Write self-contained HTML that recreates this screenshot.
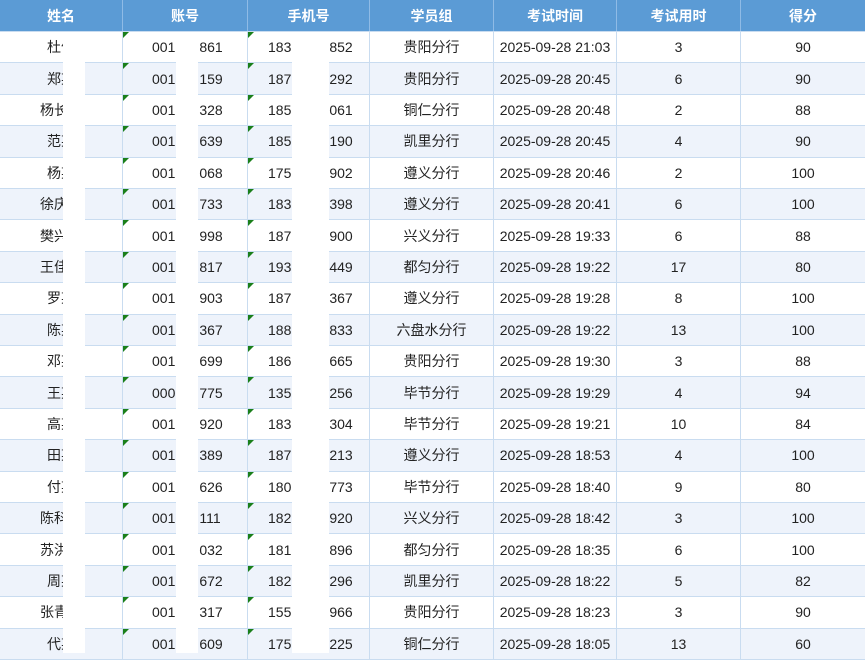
<!DOCTYPE html>
<html><head><meta charset="utf-8">
<style>
*{margin:0;padding:0;box-sizing:border-box}
body{width:865px;height:661px;overflow:hidden;background:#fff;position:relative;font-family:"Liberation Sans","Noto Sans CJK SC",sans-serif;font-size:14px;color:#222}
.r{position:absolute;left:0;width:865px;height:31.4px;display:flex;border-bottom:1px solid #c9dcf0}
.r.a{background:#eef3fb}
.r div{height:100%;display:flex;align-items:center;justify-content:center;border-right:1px solid #c9dcf0;position:relative;white-space:nowrap}
.h{top:0;height:32px;background:#5b9bd5;color:#fff;font-weight:bold;border-bottom:1px solid #c9dcf0}
.h div{border-right:1px solid #8fbbe6}
.c1{width:123px}.c2{width:125px}.c3{width:122px}.c4{width:124px}.c5{width:123px}.c6{width:124px}.c7{width:124px;border-right:none!important}
.t::before{content:"";position:absolute;left:0;top:0;border-top:6px solid #1a7f1a;border-right:6px solid transparent}
.r .c2.t{justify-content:flex-start;padding-left:29px}
.r .c3.t{justify-content:flex-start;padding-left:20px}
.c2 i{display:inline-block;width:24px}
.c3 i{display:inline-block;width:38px}
.w{position:absolute;top:32px;height:621px;background:#fff}
</style></head><body>
<div class="r h"><div class="c1">姓名</div><div class="c2">账号</div><div class="c3">手机号</div><div class="c4">学员组</div><div class="c5">考试时间</div><div class="c6">考试用时</div><div class="c7">得分</div></div>
<div class="r" style="top:32px"><div class="c1">杜仲</div><div class="c2 t">001<i></i>861</div><div class="c3 t">183<i></i>852</div><div class="c4">贵阳分行</div><div class="c5">2025-09-28 21:03</div><div class="c6">3</div><div class="c7">90</div></div>
<div class="r a" style="top:63.4px"><div class="c1">郑某</div><div class="c2 t">001<i></i>159</div><div class="c3 t">187<i></i>292</div><div class="c4">贵阳分行</div><div class="c5">2025-09-28 20:45</div><div class="c6">6</div><div class="c7">90</div></div>
<div class="r" style="top:94.8px"><div class="c1">杨长某</div><div class="c2 t">001<i></i>328</div><div class="c3 t">185<i></i>061</div><div class="c4">铜仁分行</div><div class="c5">2025-09-28 20:48</div><div class="c6">2</div><div class="c7">88</div></div>
<div class="r a" style="top:126.2px"><div class="c1">范某</div><div class="c2 t">001<i></i>639</div><div class="c3 t">185<i></i>190</div><div class="c4">凯里分行</div><div class="c5">2025-09-28 20:45</div><div class="c6">4</div><div class="c7">90</div></div>
<div class="r" style="top:157.6px"><div class="c1">杨某</div><div class="c2 t">001<i></i>068</div><div class="c3 t">175<i></i>902</div><div class="c4">遵义分行</div><div class="c5">2025-09-28 20:46</div><div class="c6">2</div><div class="c7">100</div></div>
<div class="r a" style="top:189px"><div class="c1">徐庆某</div><div class="c2 t">001<i></i>733</div><div class="c3 t">183<i></i>398</div><div class="c4">遵义分行</div><div class="c5">2025-09-28 20:41</div><div class="c6">6</div><div class="c7">100</div></div>
<div class="r" style="top:220.4px"><div class="c1">樊兴某</div><div class="c2 t">001<i></i>998</div><div class="c3 t">187<i></i>900</div><div class="c4">兴义分行</div><div class="c5">2025-09-28 19:33</div><div class="c6">6</div><div class="c7">88</div></div>
<div class="r a" style="top:251.8px"><div class="c1">王佳某</div><div class="c2 t">001<i></i>817</div><div class="c3 t">193<i></i>449</div><div class="c4">都匀分行</div><div class="c5">2025-09-28 19:22</div><div class="c6">17</div><div class="c7">80</div></div>
<div class="r" style="top:283.2px"><div class="c1">罗某</div><div class="c2 t">001<i></i>903</div><div class="c3 t">187<i></i>367</div><div class="c4">遵义分行</div><div class="c5">2025-09-28 19:28</div><div class="c6">8</div><div class="c7">100</div></div>
<div class="r a" style="top:314.6px"><div class="c1">陈某</div><div class="c2 t">001<i></i>367</div><div class="c3 t">188<i></i>833</div><div class="c4">六盘水分行</div><div class="c5">2025-09-28 19:22</div><div class="c6">13</div><div class="c7">100</div></div>
<div class="r" style="top:346px"><div class="c1">邓某</div><div class="c2 t">001<i></i>699</div><div class="c3 t">186<i></i>665</div><div class="c4">贵阳分行</div><div class="c5">2025-09-28 19:30</div><div class="c6">3</div><div class="c7">88</div></div>
<div class="r a" style="top:377.4px"><div class="c1">王某</div><div class="c2 t">000<i></i>775</div><div class="c3 t">135<i></i>256</div><div class="c4">毕节分行</div><div class="c5">2025-09-28 19:29</div><div class="c6">4</div><div class="c7">94</div></div>
<div class="r" style="top:408.8px"><div class="c1">高某</div><div class="c2 t">001<i></i>920</div><div class="c3 t">183<i></i>304</div><div class="c4">毕节分行</div><div class="c5">2025-09-28 19:21</div><div class="c6">10</div><div class="c7">84</div></div>
<div class="r a" style="top:440.2px"><div class="c1">田某</div><div class="c2 t">001<i></i>389</div><div class="c3 t">187<i></i>213</div><div class="c4">遵义分行</div><div class="c5">2025-09-28 18:53</div><div class="c6">4</div><div class="c7">100</div></div>
<div class="r" style="top:471.6px"><div class="c1">付某</div><div class="c2 t">001<i></i>626</div><div class="c3 t">180<i></i>773</div><div class="c4">毕节分行</div><div class="c5">2025-09-28 18:40</div><div class="c6">9</div><div class="c7">80</div></div>
<div class="r a" style="top:503px"><div class="c1">陈科某</div><div class="c2 t">001<i></i>111</div><div class="c3 t">182<i></i>920</div><div class="c4">兴义分行</div><div class="c5">2025-09-28 18:42</div><div class="c6">3</div><div class="c7">100</div></div>
<div class="r" style="top:534.4px"><div class="c1">苏洪某</div><div class="c2 t">001<i></i>032</div><div class="c3 t">181<i></i>896</div><div class="c4">都匀分行</div><div class="c5">2025-09-28 18:35</div><div class="c6">6</div><div class="c7">100</div></div>
<div class="r a" style="top:565.8px"><div class="c1">周某</div><div class="c2 t">001<i></i>672</div><div class="c3 t">182<i></i>296</div><div class="c4">凯里分行</div><div class="c5">2025-09-28 18:22</div><div class="c6">5</div><div class="c7">82</div></div>
<div class="r" style="top:597.2px"><div class="c1">张青某</div><div class="c2 t">001<i></i>317</div><div class="c3 t">155<i></i>966</div><div class="c4">贵阳分行</div><div class="c5">2025-09-28 18:23</div><div class="c6">3</div><div class="c7">90</div></div>
<div class="r a" style="top:628.6px"><div class="c1">代某</div><div class="c2 t">001<i></i>609</div><div class="c3 t">175<i></i>225</div><div class="c4">铜仁分行</div><div class="c5">2025-09-28 18:05</div><div class="c6">13</div><div class="c7">60</div></div>
<div class="w" style="left:63px;width:22px"></div>
<div class="w" style="left:176px;width:22px"></div>
<div class="w" style="left:292px;width:37px"></div>
</body></html>
